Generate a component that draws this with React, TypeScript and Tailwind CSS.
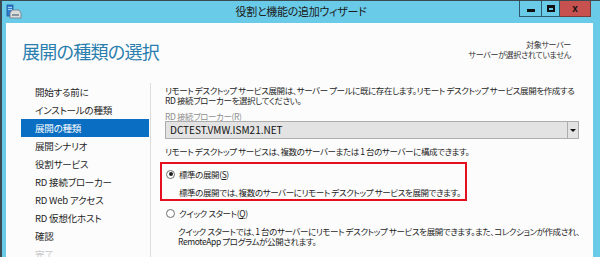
import React from "react";

const jp =
  "font-['Noto_Sans_CJK_JP','Noto_Sans_CJK_SC',sans-serif] [font-feature-settings:'palt']";

const navItems = [
  "開始する前に",
  "インストールの種類",
  "展開の種類",
  "展開シナリオ",
  "役割サービス",
  "RD 接続ブローカー",
  "RD Web アクセス",
  "RD 仮想化ホスト",
  "確認",
  "完了",
];

function Radio({ checked }: { checked?: boolean }) {
  return (
    <span className="flex h-[9px] w-[9px] shrink-0 items-center justify-center rounded-full border border-[#707070] bg-white">
      {checked && <span className="h-[4px] w-[4px] rounded-full bg-[#1e1e1e]" />}
    </span>
  );
}

function AppIcon() {
  return (
    <svg width="16" height="16" viewBox="0 0 16 16">
      <rect x="1" y="1" width="6" height="11" fill="#2f7fd0" stroke="#1d5597" strokeWidth="0.8" />
      <rect x="2" y="3" width="4" height="1" fill="#a8d2f5" />
      <rect x="2" y="5" width="4" height="1" fill="#a8d2f5" />
      <path d="M4 9 L6 6 L13 6 L15 9 L15 14 L4 14 Z" fill="#d9dde0" stroke="#6f7a82" strokeWidth="0.8" />
      <rect x="6" y="10" width="7" height="2" fill="#8a949b" />
    </svg>
  );
}

export default function App() {
  return (
    <div className={`${jp} flex h-[257px] w-[600px] flex-col overflow-hidden border-l-2 border-t border-[#3b4b54] bg-[#6acbe8]`}>
      {/* title bar */}
      <div className="grid h-[22px] shrink-0 grid-cols-[1fr_auto_1fr]">
        <div className="flex items-start pl-[4px] pt-[3px]">
          <AppIcon />
        </div>
        <div className="pt-[4px] text-[11px] leading-[12px] tracking-[-0.3px] text-[#1a1a1a]">役割と機能の追加ウィザード</div>
        <div className="flex items-start justify-end pr-[9px]">
          <div className="flex h-[16px] w-[23px] items-center justify-center border border-t-0 border-[#2f5a6b]">
            <span className="mt-[3px] h-[3px] w-[8px] bg-[#111]" />
          </div>
          <div className="flex h-[16px] w-[18px] items-center justify-center border border-l-0 border-t-0 border-[#2f5a6b]">
            <span className="h-[7px] w-[8px] border-2 border-t-[3px] border-[#111]" />
          </div>
          <div className="flex h-[16px] w-[31px] items-center justify-center border border-l-0 border-t-0 border-[#7a3a38] bg-[#c7514e] text-[10px] font-bold leading-none text-[#111] font-['Liberation_Sans',sans-serif]">
            x
          </div>
        </div>
      </div>

      {/* white panel */}
      <div className="ml-[4px] mr-[7px] flex flex-1 flex-col bg-[#fcfcfc]">
        <div className="flex h-[60px] shrink-0 justify-between">
          <h1 className="pl-[16px] pt-[18px] text-[18px] leading-[20px] tracking-[-0.7px] text-[#2a7fae]">展開の種類の選択</h1>
          <div className="pr-[22px] pt-[17px] text-right text-[8px] leading-[10px] tracking-[-0.3px] text-[#333]">
            <div>対象サーバー</div>
            <div>サーバーが選択されていません</div>
          </div>
        </div>

        <div className="flex flex-1">
          <nav className="w-[145px] shrink-0 border-r border-[#dcdcdc] pl-[15px]">
            {navItems.map((item, i) => (
              <div
                key={item}
                className={`flex h-[18px] w-[128px] items-center pl-[14px] text-[9.5px] tracking-[-0.2px] ${
                  i === 2 ? "bg-[#0a6fc2] text-white" : i === 9 ? "text-[#c8c8c8]" : "text-[#1e1e1e]"
                }`}
              >
                {item}
              </div>
            ))}
          </nav>

          <div className="flex flex-col pl-[14px] pt-[2px] text-[8.5px] leading-[10px] tracking-[-0.4px] text-[#1e1e1e]">
            <p className="whitespace-nowrap">
              リモート デスクトップ サービス展開は、サーバー プールに既に存在します。リモート デスクトップ サービス展開を作成する
            </p>
            <p className="whitespace-nowrap">RD 接続ブローカーを選択してください。</p>

            <p className="mt-[6px] text-[#8f8f8f]">
              RD 接続ブローカー(<span className="underline">R</span>)
            </p>
            <div className="flex h-[18px] w-[414px] items-stretch border border-[#adadad] bg-[#e3e3e3] tracking-normal">
              <div className="flex flex-1 items-center pl-[4px] text-[10px] text-[#111]">DCTEST.VMW.ISM21.NET</div>
              <div className="flex w-[11px] items-center justify-center border-l border-[#adadad]">
                <span className="h-0 w-0 border-x-[3px] border-t-[3px] border-x-transparent border-t-[#111]" />
              </div>
            </div>

            <p className="mt-[7px] whitespace-nowrap">
              リモート デスクトップ サービスは、複数のサーバーまたは 1 台のサーバーに構成できます。
            </p>

            <div className="-ml-[5px] mt-[6px] w-[307px] border-2 border-[#e5101f] pb-[2px] pl-[4px] pt-[5px]">
              <div className="flex items-center gap-[4px]">
                <Radio checked />
                <span>
                  標準の展開(<span className="underline">S</span>)
                </span>
              </div>
              <p className="mt-[8px] whitespace-nowrap pl-[13px]">
                標準の展開では、複数のサーバーにリモート デスクトップ サービスを展開できます。
              </p>
            </div>

            <div className="mt-[7px] flex items-center gap-[4px] pl-[1px]">
              <Radio />
              <span>
                クイック スタート(<span className="underline">Q</span>)
              </span>
            </div>
            <div className="mt-[8px] pl-[13px]">
              <p className="whitespace-nowrap">
                クイック スタートでは、1 台のサーバーにリモート デスクトップ サービスを展開できます。また、コレクションが作成され、
              </p>
              <p className="whitespace-nowrap">RemoteApp プログラムが公開されます。</p>
            </div>
          </div>
        </div>
      </div>
    </div>
  );
}
